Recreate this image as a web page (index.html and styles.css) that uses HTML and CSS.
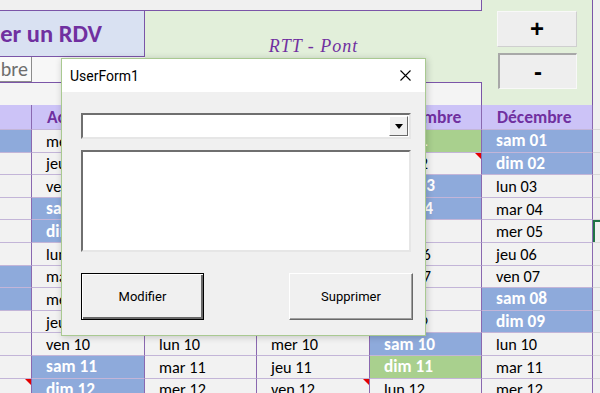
FILE: index.html
```html
<!DOCTYPE html>
<html lang="fr">
<head>
    <meta charset="UTF-8">
    <title>Planning RDV</title>
    <link rel="stylesheet" href="styles.css">
</head>
<body>
    <div class="sheet">
        <div class="top">
            <div class="strip"></div>
            <div class="title-cell">Modifier un RDV</div>
            <div class="rtt">RTT - Pont</div>
            <div class="month-pick">Novembre</div>
            <div class="blank"></div>
            <div class="gap-row"></div>
            <div class="side">
                <button class="step">+</button>
                <button class="step pressed">-</button>
            </div>
            <div class="gutter"></div>
        </div>

        <div class="cal">
            <div class="cell hd"></div>
            <div class="cell hd">Août</div>
            <div class="cell hd">Septembre</div>
            <div class="cell hd">Octobre</div>
            <div class="cell hd">Novembre</div>
            <div class="cell hd">Décembre</div>
            <div class="cell edge"></div>

            <div class="cell we"></div>
            <div class="cell">mer 01</div>
            <div class="cell we">sam 01</div>
            <div class="cell">lun 01</div>
            <div class="cell hol">jeu 01</div>
            <div class="cell we">sam 01</div>
            <div class="cell edge"></div>

            <div class="cell"></div>
            <div class="cell">jeu 02</div>
            <div class="cell we">dim 02</div>
            <div class="cell">mar 02</div>
            <div class="cell note">ven 02</div>
            <div class="cell we">dim 02</div>
            <div class="cell edge"></div>

            <div class="cell"></div>
            <div class="cell">ven 03</div>
            <div class="cell">lun 03</div>
            <div class="cell">mer 03</div>
            <div class="cell we">sam 03</div>
            <div class="cell">lun 03</div>
            <div class="cell edge"></div>

            <div class="cell"></div>
            <div class="cell we">sam 04</div>
            <div class="cell">mar 04</div>
            <div class="cell">jeu 04</div>
            <div class="cell we">dim 04</div>
            <div class="cell">mar 04</div>
            <div class="cell edge"></div>

            <div class="cell"></div>
            <div class="cell we">dim 05</div>
            <div class="cell">mer 05</div>
            <div class="cell">ven 05</div>
            <div class="cell">lun 05</div>
            <div class="cell">mer 05</div>
            <div class="cell edge sel"></div>

            <div class="cell"></div>
            <div class="cell">lun 06</div>
            <div class="cell">jeu 06</div>
            <div class="cell we">sam 06</div>
            <div class="cell">mar 06</div>
            <div class="cell">jeu 06</div>
            <div class="cell edge"></div>

            <div class="cell we"></div>
            <div class="cell">mar 07</div>
            <div class="cell">ven 07</div>
            <div class="cell we">dim 07</div>
            <div class="cell">mer 07</div>
            <div class="cell">ven 07</div>
            <div class="cell edge"></div>

            <div class="cell we"></div>
            <div class="cell">mer 08</div>
            <div class="cell we">sam 08</div>
            <div class="cell">lun 08</div>
            <div class="cell">jeu 08</div>
            <div class="cell we">sam 08</div>
            <div class="cell edge"></div>

            <div class="cell"></div>
            <div class="cell">jeu 09</div>
            <div class="cell we">dim 09</div>
            <div class="cell">mar 09</div>
            <div class="cell">ven 09</div>
            <div class="cell we">dim 09</div>
            <div class="cell edge"></div>

            <div class="cell"></div>
            <div class="cell">ven 10</div>
            <div class="cell">lun 10</div>
            <div class="cell">mer 10</div>
            <div class="cell we">sam 10</div>
            <div class="cell">lun 10</div>
            <div class="cell edge"></div>

            <div class="cell"></div>
            <div class="cell we">sam 11</div>
            <div class="cell">mar 11</div>
            <div class="cell">jeu 11</div>
            <div class="cell hol">dim 11</div>
            <div class="cell">mar 11</div>
            <div class="cell edge"></div>

            <div class="cell note"></div>
            <div class="cell we">dim 12</div>
            <div class="cell">mer 12</div>
            <div class="cell note">ven 12</div>
            <div class="cell">lun 12</div>
            <div class="cell">mer 12</div>
            <div class="cell edge"></div>
        </div>

        <div class="dialog">
            <div class="dlg-title">
                <span>UserForm1</span>
                <svg class="close" width="11" height="11" viewBox="0 0 11 11">
                    <path d="M0.5 0.5 L10.5 10.5 M10.5 0.5 L0.5 10.5" stroke="#000" stroke-width="1.1" fill="none"/>
                </svg>
            </div>
            <div class="dlg-body">
                <div class="combo">
                    <div class="drop"><span class="arrow"></span></div>
                </div>
                <div class="list"></div>
                <div class="actions">
                    <button class="btn default">Modifier</button>
                    <button class="btn">Supprimer</button>
                </div>
            </div>
        </div>
    </div>
</body>
</html>
```

FILE: styles.css
```css
* {
    box-sizing: border-box;
}

body {
    margin: 0;
    background: #f0f0f0;
    font-family: "Carlito", "Lato", sans-serif;
}

.sheet {
    position: relative;
    width: 600px;
    height: 393px;
    overflow: hidden;
}

/* top block above the calendar */
.top {
    display: grid;
    grid-template-columns: 32px 113px 112px 113px 112px 111px 7px;
    grid-template-rows: 11px 46px 25px 23px;
}

.strip {
    grid-column: 1 / 6;
    grid-row: 1;
    background: #f0f0f0;
    border-right: 1px solid #7b55a8;
    border-bottom: 1px solid #7b55a8;
}

.title-cell {
    grid-column: 1 / 3;
    grid-row: 2;
    display: flex;
    align-items: center;
    justify-content: flex-end;
    padding-right: 42px;
    overflow: hidden;
    white-space: nowrap;
    background: #d9e1f2;
    border-right: 1px solid #7b55a8;
    border-bottom: 1px solid #7b55a8;
    color: #7030a0;
    font-size: 24.5px;
    font-weight: 700;
}

.rtt {
    grid-column: 3 / 6;
    grid-row: 2 / 4;
    display: flex;
    align-items: center;
    justify-content: center;
    background: #e2efda;
    color: #7030a0;
    font-family: "Liberation Serif", serif;
    font-style: italic;
    font-size: 18px;
    letter-spacing: 1px;
}

.month-pick {
    grid-column: 1;
    grid-row: 3;
    display: flex;
    align-items: center;
    justify-content: flex-end;
    padding-right: 3px;
    overflow: hidden;
    white-space: nowrap;
    background: #fafafa;
    border-right: 1px solid #8c8c8c;
    border-bottom: 1px solid #8c8c8c;
    color: #6e6e6e;
    font-size: 20px;
}

.blank {
    grid-column: 2;
    grid-row: 3;
    background: #f7f7f7;
}

.gap-row {
    grid-column: 1 / 6;
    grid-row: 4;
    background: #f4f4f4;
    border-top: 1px solid #7b55a8;
    border-right: 1px solid #7b55a8;
}

.side {
    grid-column: 6;
    grid-row: 1 / 5;
    display: flex;
    flex-direction: column;
    gap: 6px;
    padding: 11px 0 0 15px;
    background: #e2efda;
    border-right: 1px solid #7b55a8;
}

.step {
    width: 80px;
    height: 36px;
    padding: 0;
    background: #eeeeee;
    border: 1px solid;
    border-color: #f8f8f8 #cfcfcf #cfcfcf #f8f8f8;
    font-family: "Liberation Sans", sans-serif;
    font-size: 24px;
    font-weight: 700;
    line-height: 1;
    color: #000;
}

.step.pressed {
    margin-left: 1px;
    width: 79px;
    border-color: #a8a8a8 #f8f8f8 #f8f8f8 #a8a8a8;
    border-width: 2px 1px 1px 2px;
}

.gutter {
    grid-column: 7;
    grid-row: 1 / 5;
    background: #f0f0f0;
}

/* calendar grid */
.cal {
    display: grid;
    grid-template-columns: 32px 113px 112px 113px 112px 111px 7px;
    grid-template-rows: 25px;
    grid-auto-rows: 22.6px;
}

.cell {
    position: relative;
    display: flex;
    align-items: center;
    padding-left: 14px;
    overflow: hidden;
    white-space: nowrap;
    background: #f2f2f2;
    border-right: 1px solid #8a68b0;
    border-bottom: 1px solid #c3b5d8;
    color: #000;
    font-size: 16.3px;
}

.hd {
    background: #ccc3f7;
    color: #7030a0;
    font-weight: 700;
    font-size: 17.5px;
    padding-left: 15px;
}

.we {
    background: #8eaadb;
    color: #fff;
    font-weight: 700;
    font-size: 17.3px;
}

.hol {
    background: #a9d08e;
    color: #fff;
    font-weight: 700;
    font-size: 17.3px;
}

.edge {
    background: #f0f0f0;
    border-right: none;
    border-bottom: 1px solid #d9d9d9;
}

.sel {
    box-shadow: inset 2px 2px 0 #217346;
}

.note::after {
    content: "";
    position: absolute;
    top: 0;
    right: 0;
    border-top: 6px solid #e40000;
    border-left: 6px solid transparent;
}

/* the VBA form on top */
.dialog {
    position: absolute;
    left: 61px;
    top: 58px;
    width: 365px;
    height: 278px;
    display: flex;
    flex-direction: column;
    background: #f0f0f0;
    border: 1px solid #a9c991;
    box-shadow: 1px 1px 7px rgba(0, 0, 0, 0.2);
    font-family: Roboto, sans-serif;
}

.dlg-title {
    height: 33px;
    display: flex;
    align-items: center;
    justify-content: space-between;
    padding: 0 14px 0 8px;
    background: #fff;
    color: #000;
    font-size: 14px;
}

.dlg-body {
    flex: 1;
    display: flex;
    flex-direction: column;
    padding: 21px 0 0 19px;
}

.combo {
    width: 330px;
    height: 26px;
    display: flex;
    justify-content: flex-end;
    padding: 1px 1px 1px 0;
    background: #fff;
    border: 2px solid;
    border-color: #6f6f6f #e6e6e6 #e6e6e6 #6f6f6f;
}

.drop {
    width: 19px;
    display: flex;
    align-items: center;
    justify-content: center;
    background: #f0f0f0;
    border: 1px solid;
    border-color: #fff #696969 #696969 #fff;
}

.arrow {
    border-left: 4px solid transparent;
    border-right: 4px solid transparent;
    border-top: 5px solid #000;
}

.list {
    width: 330px;
    height: 102px;
    margin-top: 11px;
    background: #fff;
    border: 2px solid;
    border-color: #6f6f6f #e6e6e6 #e6e6e6 #6f6f6f;
}

.actions {
    width: 332px;
    margin-top: 21px;
    display: flex;
    justify-content: space-between;
}

.btn {
    width: 124px;
    height: 47px;
    padding: 0;
    background: #f0f0f0;
    border: 1px solid;
    border-color: #fff #696969 #696969 #fff;
    box-shadow: inset -1px -1px 0 #a0a0a0;
    font-family: Roboto, sans-serif;
    font-size: 13px;
    color: #000;
}

.btn.default {
    width: 123px;
    border: 1px solid #000;
    box-shadow: inset 1px 1px 0 #fff, inset -2px -2px 0 #696969;
}
```
